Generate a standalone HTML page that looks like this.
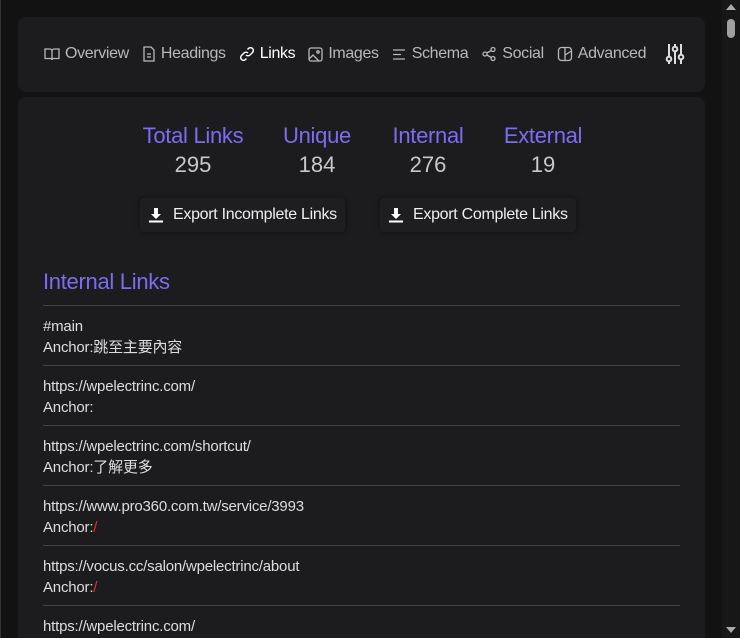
<!DOCTYPE html>
<html style="overflow:hidden;height:638px"><head><meta charset="utf-8"><style>
*{box-sizing:border-box;margin:0;padding:0}
body{width:740px;height:638px;overflow:hidden;background:#111112;font-family:"Liberation Sans","Noto Sans CJK TC",sans-serif;position:relative;color:#ddd}
.frame{position:absolute;left:0;top:0;width:722px;height:638px;border-left:1px solid #333;background:#121213}
.nav{position:absolute;left:18px;top:17px;width:687px;height:75px;background:#1c1c1e;border-radius:8px}
.nav .items{position:absolute;left:26px;top:37px;transform:translateY(-50%);display:flex;align-items:center;font-size:16px;color:#b8b8bc;white-space:nowrap;letter-spacing:-0.35px}
.nav .it{display:flex;align-items:center;margin-right:13px}
.nav svg{margin-right:5px}
.main{position:absolute;left:18px;top:97px;width:687px;height:541px;background:#1c1c1e;border-radius:8px 8px 0 0;overflow:hidden}
.stat{position:absolute;top:24px;text-align:center;transform:translateX(-50%)}
.stat .t{color:#7c6cf2;font-size:22px;line-height:29px;white-space:nowrap;letter-spacing:-0.3px}
.stat .n{color:#c8c8cc;font-size:22px;line-height:29px}
.btn{position:absolute;top:101px;height:34px;background:#1e1e20;box-shadow:0 0 6px rgba(0,0,0,.5);border-radius:4px;color:#eee;font-size:16px;display:flex;align-items:center;padding:0 8px;letter-spacing:-0.3px;white-space:nowrap}
.btn svg{margin-right:9px}
h2{position:absolute;left:25px;top:172px;color:#7c6cf2;font-size:22px;font-weight:normal;letter-spacing:-0.3px}
.list{position:absolute;left:25px;top:208px;width:637px}
.row{border-top:1px solid #444;height:60px;padding-top:10px;font-size:15px;line-height:21px;color:#ddd;letter-spacing:-0.2px}
.red{color:#e03030}
.sb{position:absolute;left:722px;top:0;width:18px;height:638px;background:#171717}
.thumb{position:absolute;left:727px;top:19px;width:8px;height:19px;background:#a0a0a0;border-radius:4px}
</style></head><body>
<div class="frame"></div>
<div class="nav"><div class="items">
<div class="it"><svg width="16" height="16" viewBox="0 0 16 16" fill="none" stroke="#b8b8bc" stroke-width="1.3"><path d="M1 3h5a2 2 0 0 1 2 2v9a1.5 1.5 0 0 0-1.5-1.5H1zM15 3h-5a2 2 0 0 0-2 2v9a1.5 1.5 0 0 1 1.5-1.5H15z"/></svg>Overview</div>
<div class="it"><svg width="14" height="16" viewBox="0 0 14 16" fill="none" stroke="#b8b8bc" stroke-width="1.3"><path d="M2 1h7l3 3v11H2zM5 8h4M5 11h4"/></svg>Headings</div>
<div class="it" style="color:#fff"><svg width="16" height="16" viewBox="0 0 16 16" fill="none" stroke="#fff" stroke-width="1.5"><path d="M7 9a3 3 0 0 0 4 0l2.5-2.5a2.8 2.8 0 0 0-4-4L8.5 3.5M9 7a3 3 0 0 0-4 0L2.5 9.5a2.8 2.8 0 0 0 4 4l1-1"/></svg>Links</div>
<div class="it"><svg width="15" height="15" viewBox="0 0 15 15" fill="none" stroke="#b8b8bc" stroke-width="1.3"><rect x="1" y="1" width="13" height="13" rx="2"/><circle cx="10" cy="5" r="1.2"/><path d="M1 12l4-4 6 6"/></svg>Images</div>
<div class="it"><svg width="15" height="15" viewBox="0 0 15 15" fill="none" stroke="#b8b8bc" stroke-width="1.3"><path d="M1 3h12M1 7.5h8M1 12h12"/></svg>Schema</div>
<div class="it"><svg width="16" height="16" viewBox="0 0 16 16" fill="none" stroke="#b8b8bc" stroke-width="1.3"><circle cx="4" cy="8" r="2"/><circle cx="12" cy="3.5" r="2"/><circle cx="12" cy="12.5" r="2"/><path d="M5.8 7l4.4-2.5M5.8 9l4.4 2.5"/></svg>Social</div>
<div class="it"><svg width="16" height="16" viewBox="0 0 16 16" fill="none" stroke="#b8b8bc" stroke-width="1.3"><rect x="1.5" y="1.5" width="13" height="13" rx="3"/><path d="M8 1.5v13M8 9l6.5-4"/></svg>Advanced</div>
<div class="it" style="margin-left:6px"><svg width="20" height="22" viewBox="0 0 20 22" fill="none" stroke="#ddd" stroke-width="2"><path d="M4 1v20M10 1v20M16 1v20"/><circle cx="4" cy="16" r="2.3" fill="#1c1c1e"/><circle cx="10" cy="6" r="2.3" fill="#1c1c1e"/><circle cx="16" cy="14" r="2.3" fill="#1c1c1e"/></svg></div>
</div></div>
<div class="main">
<div class="stat" style="left:175px"><div class="t">Total Links</div><div class="n">295</div></div>
<div class="stat" style="left:299px"><div class="t">Unique</div><div class="n">184</div></div>
<div class="stat" style="left:410px"><div class="t">Internal</div><div class="n">276</div></div>
<div class="stat" style="left:525px"><div class="t">External</div><div class="n">19</div></div>
<div class="btn" style="left:122px"><svg width="16" height="16" viewBox="0 0 16 16" fill="#fff"><path d="M6 1h4v6h3l-5 5-5-5h3z"/><rect x="1" y="13.5" width="14" height="2"/></svg>Export Incomplete Links</div>
<div class="btn" style="left:362px"><svg width="16" height="16" viewBox="0 0 16 16" fill="#fff"><path d="M6 1h4v6h3l-5 5-5-5h3z"/><rect x="1" y="13.5" width="14" height="2"/></svg>Export Complete Links</div>
<h2>Internal Links</h2>
<div class="list">
<div class="row">#main<br>Anchor:跳至主要內容</div>
<div class="row">https://wpelectrinc.com/<br>Anchor:</div>
<div class="row">https://wpelectrinc.com/shortcut/<br>Anchor:了解更多</div>
<div class="row">https://www.pro360.com.tw/service/3993<br>Anchor:<span class="red">/</span></div>
<div class="row">https://vocus.cc/salon/wpelectrinc/about<br>Anchor:<span class="red">/</span></div>
<div class="row">https://wpelectrinc.com/<br>Anchor:</div>
</div>
</div>
<div class="sb"></div>
<div class="thumb"></div>
<div style="position:absolute;left:726px;top:4px;width:0;height:0;border-left:5px solid transparent;border-right:5px solid transparent;border-bottom:6px solid #aaa"></div>
<div style="position:absolute;left:726px;top:627px;width:0;height:0;border-left:5px solid transparent;border-right:5px solid transparent;border-top:6px solid #aaa"></div>
</body></html>
